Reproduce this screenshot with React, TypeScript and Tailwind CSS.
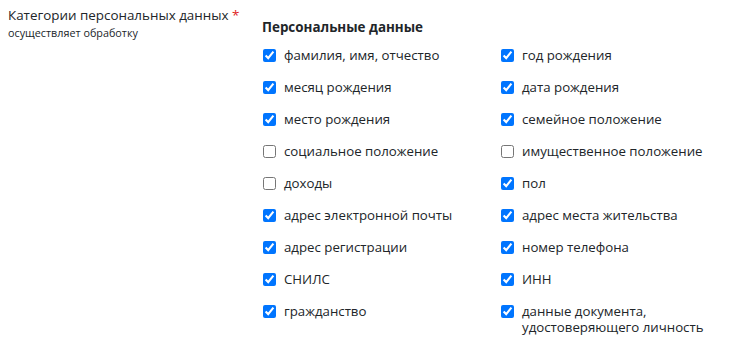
const left = [
  { label: 'фамилия, имя, отчество', checked: true },
  { label: 'месяц рождения', checked: true },
  { label: 'место рождения', checked: true },
  { label: 'социальное положение', checked: false },
  { label: 'доходы', checked: false },
  { label: 'адрес электронной почты', checked: true },
  { label: 'адрес регистрации', checked: true },
  { label: 'СНИЛС', checked: true },
  { label: 'гражданство', checked: true },
];

const right = [
  { label: 'год рождения', checked: true },
  { label: 'дата рождения', checked: true },
  { label: 'семейное положение', checked: true },
  { label: 'имущественное положение', checked: false },
  { label: 'пол', checked: true },
  { label: 'адрес места жительства', checked: true },
  { label: 'номер телефона', checked: true },
  { label: 'ИНН', checked: true },
  { label: 'данные документа, удостоверяющего личность', checked: true },
];

const items = left.flatMap((item, i) => [item, right[i]]);

export default function App() {
  return (
    <div className="flex bg-white pl-2 pt-[5px] text-[#212529]" style={{ fontFamily: '"Open Sans", "Noto Sans", sans-serif' }}>
      <div className="w-[254px] shrink-0">
        <div className="text-[13.4px] leading-5">
          Категории персональных данных <span className="text-[#e02424]">*</span>
        </div>
        <div className="text-[10.8px] leading-4">осуществляет обработку</div>
      </div>
      <div className="flex-1">
        <h3 className="mt-[12px] text-[13.4px] font-bold leading-5">Персональные данные</h3>
        <div className="mt-[10px] grid grid-cols-[238px_1fr] gap-y-4">
          {items.map((item) => (
            <label key={item.label} className="flex items-start text-[13.25px] leading-4">
              <input
                type="checkbox"
                defaultChecked={item.checked}
                className="mt-[2px] mr-2 ml-[1px] h-[13px] w-[13px] shrink-0"
              />
              <span className="max-w-[200px]">{item.label}</span>
            </label>
          ))}
        </div>
      </div>
    </div>
  );
}
